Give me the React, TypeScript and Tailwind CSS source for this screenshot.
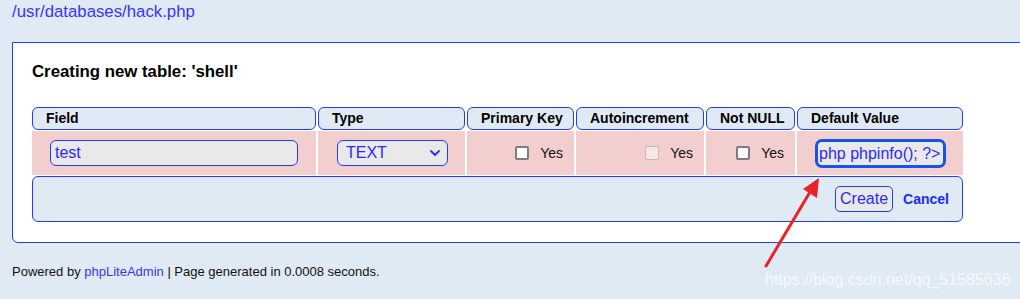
import React from 'react';

const blue = 'border-[#1f3cff]';

const Checkbox: React.FC<{ disabled?: boolean }> = ({ disabled }) => (
    <span
        className={
            disabled
                ? 'inline-block w-[14px] h-[14px] rounded-[2px] border border-[#cdb6b8] bg-[#f7e6e6]'
                : 'inline-block w-[14px] h-[14px] rounded-[2px] border-2 border-[#7c7c84] bg-white'
        }
    />
);

const YesCell: React.FC<{ disabled?: boolean }> = ({ disabled }) => (
    <div className="mt-[1px] h-[44px] bg-[#f2cece] flex items-center justify-end pr-[11px] gap-[11px]">
        <Checkbox disabled={disabled} />
        <span className="text-[14px] text-[#111]">Yes</span>
    </div>
);

export default function App() {
    const headers = ['Field', 'Type', 'Primary Key', 'Autoincrement', 'Not NULL', 'Default Value'];

    return (
        <div
            className="relative w-[1020px] h-[299px] overflow-hidden bg-[#e0eaf5]"
            style={{ fontFamily: '"Liberation Sans", Arial, sans-serif' }}
        >
            {/* Database path */}
            <div className="pt-[2px] pl-[12px] h-[42px] text-[16.8px] leading-[20px] text-[#3535ff]">
                /usr/databases/hack.php
            </div>

            {/* Main panel */}
            <div className={`ml-[12px] w-[1030px] bg-white border ${blue} rounded-bl-[6px] pt-[19px] pl-[19px] pb-[20px]`}>
                <h2 className="text-[16.8px] leading-[20px] font-bold text-black">Creating new table: 'shell'</h2>

                <div className="mt-[25px] grid grid-cols-[284px_147px_107px_128px_89px_166px] gap-x-[2px]">
                    {headers.map((h) => (
                        <div
                            key={h}
                            className={`h-[23px] rounded-[6px] border ${blue} bg-[#e0eaf5] pl-[13px] whitespace-nowrap text-[14px] font-bold leading-[20px] text-black`}
                        >
                            {h}
                        </div>
                    ))}

                    {/* Field */}
                    <div className="mt-[1px] h-[44px] bg-[#f2cece] flex items-center pl-[18px]">
                        <div className={`w-[248px] h-[26px] rounded-[6px] border ${blue} bg-[#e9e9ea] pl-[4px] text-[16px] leading-[24px] text-[#2a2aff]`}>
                            test
                        </div>
                    </div>

                    {/* Type */}
                    <div className="mt-[1px] h-[44px] bg-[#f2cece] flex items-center pl-[19px]">
                        <div className={`w-[111px] h-[26px] rounded-[6px] border ${blue} bg-[#e9e9ea] pl-[8px] pr-[7px] flex items-center justify-between text-[16px] text-[#2a2aff]`}>
                            <span>TEXT</span>
                            <svg width="10" height="6" viewBox="0 0 10 6" fill="none">
                                <path d="M1 1l4 4 4-4" stroke="#2a2aff" strokeWidth="1.8" strokeLinecap="round" strokeLinejoin="round" />
                            </svg>
                        </div>
                    </div>

                    <YesCell />
                    <YesCell disabled />
                    <YesCell />

                    {/* Default value */}
                    <div className="mt-[1px] h-[44px] bg-[#f2cece] flex items-center pl-[18px]">
                        <div className="w-[131px] h-[29px] rounded-[7px] border-[3px] border-[#1554e8] bg-[#e9e9ea] pl-[1px] text-[16px] leading-[23px] text-[#2a2aff] whitespace-nowrap overflow-hidden">
                            php phpinfo(); ?&gt;
                        </div>
                    </div>

                    {/* Actions */}
                    <div className={`col-span-6 mt-[1px] h-[46px] rounded-[6px] border ${blue} bg-[#e0eaf5] flex items-center justify-end pr-[13px] gap-[10px]`}>
                        <button className={`h-[26px] px-[4px] rounded-[5px] border ${blue} bg-[#e9e9ea] text-[16px] text-[#2a2aff]`}>
                            Create
                        </button>
                        <span className="text-[14px] font-bold text-[#1a2cff]">Cancel</span>
                    </div>
                </div>
            </div>

            {/* Footer */}
            <div className="mt-[21px] pl-[12px] text-[13px] leading-[15px] text-[#111]">
                Powered by <span className="text-[#3535ff]">phpLiteAdmin</span> | Page generated in 0.0008 seconds.
            </div>

            {/* Annotation arrow */}
            <svg className="absolute left-0 top-0 pointer-events-none" width="1020" height="299">
                <line x1="766" y1="266" x2="810" y2="192" stroke="#ea2228" strokeWidth="3" strokeLinecap="round" />
                <polygon points="819,178 817,198 803,189" fill="#ea2228" />
            </svg>

            {/* Watermark */}
            <div className="absolute left-[765px] top-[271px] text-[16px] leading-[18px] text-white/70 whitespace-nowrap">
                https://blog.csdn.net/qq_51585636
            </div>
        </div>
    );
}
